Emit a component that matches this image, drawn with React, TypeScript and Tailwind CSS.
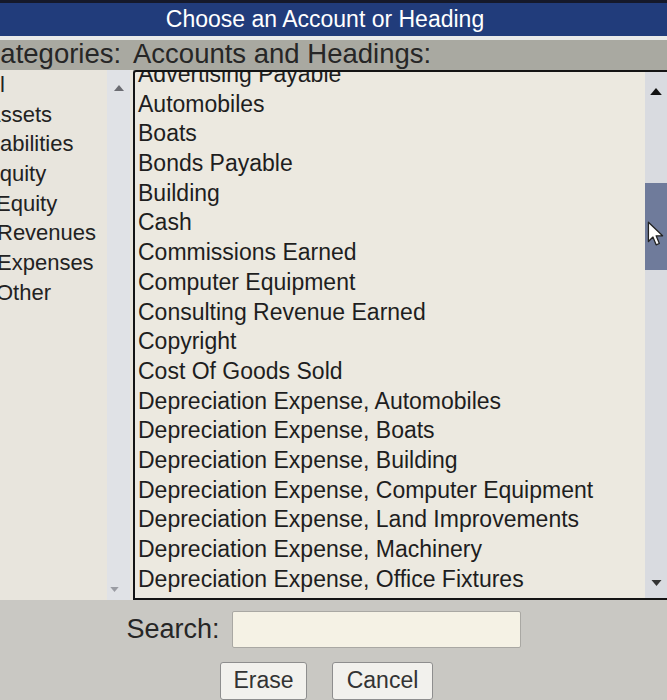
import React from 'react';

const categories: { label: string; shift: string }[] = [
  { label: 'All', shift: '-ml-[19.5px]' },
  { label: 'Assets', shift: '-ml-[14px]' },
  { label: 'Liabilities', shift: '-ml-[17px]' },
  { label: 'Equity', shift: '-ml-[15px]' },
  { label: 'Equity', shift: '-ml-[4px]' },
  { label: 'Revenues', shift: '-ml-[3px]' },
  { label: 'Expenses', shift: '-ml-[3px]' },
  { label: 'Other', shift: '-ml-[4px]' },
];

const accounts = [
  'Advertising Payable',
  'Automobiles',
  'Boats',
  'Bonds Payable',
  'Building',
  'Cash',
  'Commissions Earned',
  'Computer Equipment',
  'Consulting Revenue Earned',
  'Copyright',
  'Cost Of Goods Sold',
  'Depreciation Expense, Automobiles',
  'Depreciation Expense, Boats',
  'Depreciation Expense, Building',
  'Depreciation Expense, Computer Equipment',
  'Depreciation Expense, Land Improvements',
  'Depreciation Expense, Machinery',
  'Depreciation Expense, Office Fixtures',
];

function Tri({ up, className }: { up?: boolean; className: string }) {
  return (
    <svg viewBox="0 0 10 6" className={className}>
      <path d={up ? 'M0 6 L5 0 L10 6 Z' : 'M0 0 L10 0 L5 6 Z'} fill="currentColor" />
    </svg>
  );
}

export default function App() {
  return (
    <div className="relative w-[667px] h-[700px] overflow-hidden flex flex-col bg-[#c9c8c3] font-['Liberation_Sans',Arial,sans-serif]">
      <div className="h-[3px] bg-[#15192a]" />
      <div className="h-[33px] bg-[#213c7b] flex items-center justify-center pr-[17px] text-white text-[23px]">
        Choose an Account or Heading
      </div>
      <div className="h-[4px] bg-[#e9eaea]" />
      <div className="h-[30px] bg-[#a9a9a1] flex items-center pb-[2px] text-[27.5px] text-[#262626] whitespace-nowrap">
        <div className="w-[133px] overflow-hidden">
          <span className="block -ml-[19.5px]">Categories:</span>
        </div>
        <span>Accounts and Headings:</span>
      </div>

      <div className="h-[530px] flex">
        {/* categories list */}
        <div className="w-[133px] flex bg-[#e8e5dd]">
          <div className="w-[107px] overflow-hidden text-[22px] text-[#222]">
            {categories.map((c, i) => (
              <div key={i} className="h-[29.7px] leading-[29.7px] whitespace-nowrap">
                <span className={`block ${c.shift}`}>{c.label}</span>
              </div>
            ))}
          </div>
          <div className="w-[23px] bg-[#e0e2e6] flex flex-col items-center justify-between pt-[15px] pb-[8px]">
            <Tri up className="w-[10px] h-[6px] text-[#6b6c72]" />
            <Tri className="w-[9px] h-[5px] text-[#9a9ca3] -ml-[8px]" />
          </div>
        </div>

        {/* accounts list */}
        <div className="flex-1 flex border-l-2 border-t-2 border-b-2 border-[#141414] rounded-tl-[3px] bg-[#ece9e0]">
          <div className="flex-1 overflow-hidden text-[23px] text-[#1e1e1e] pl-[3px]">
            <div className="-mt-[12px]">
              {accounts.map((a) => (
                <div key={a} className="h-[29.7px] leading-[29.7px] whitespace-nowrap">{a}</div>
              ))}
            </div>
          </div>
          <div className="w-[22px] bg-[#d9dbe0] flex flex-col items-center pt-[16px] pb-[12px]">
            <Tri up className="w-[12px] h-[7px] text-[#111]" />
            <div className="mt-[88px] w-full h-[87px] bg-[#6f7b9b]" />
            <div className="flex-1" />
            <Tri className="w-[11px] h-[6px] text-[#333]" />
          </div>
        </div>
      </div>

      {/* footer */}
      <div className="flex-1 flex flex-col items-center pr-[16px] pt-[9px] gap-[12px]">
        <div className="flex items-center gap-[12px] pr-[4px]">
          <span className="text-[27px] text-[#262626]">Search:</span>
          <input className="w-[289px] h-[37px] bg-[#f5f2e5] border border-[#a9a8a3] rounded-[2px] outline-none" />
        </div>
        <div className="flex gap-[25px] pl-[2px]">
          <button className="w-[87px] h-[38px] bg-[#f2f1ed] border border-[#8e8e8e] rounded-[3px] text-[23px] text-[#333]">Erase</button>
          <button className="w-[101px] h-[38px] bg-[#f2f1ed] border border-[#8e8e8e] rounded-[3px] text-[23px] text-[#333]">Cancel</button>
        </div>
      </div>

      {/* mouse pointer */}
      <svg viewBox="0 0 13 21" className="absolute left-[647px] top-[221px] w-[17px] h-[27px]">
        <path d="M1 1 L1 16 L4.5 12.5 L7 18.5 L9.5 17.5 L7 11.5 L12 11.5 Z" fill="#fff" stroke="#222" strokeWidth="1" strokeLinejoin="round" />
      </svg>
    </div>
  );
}
